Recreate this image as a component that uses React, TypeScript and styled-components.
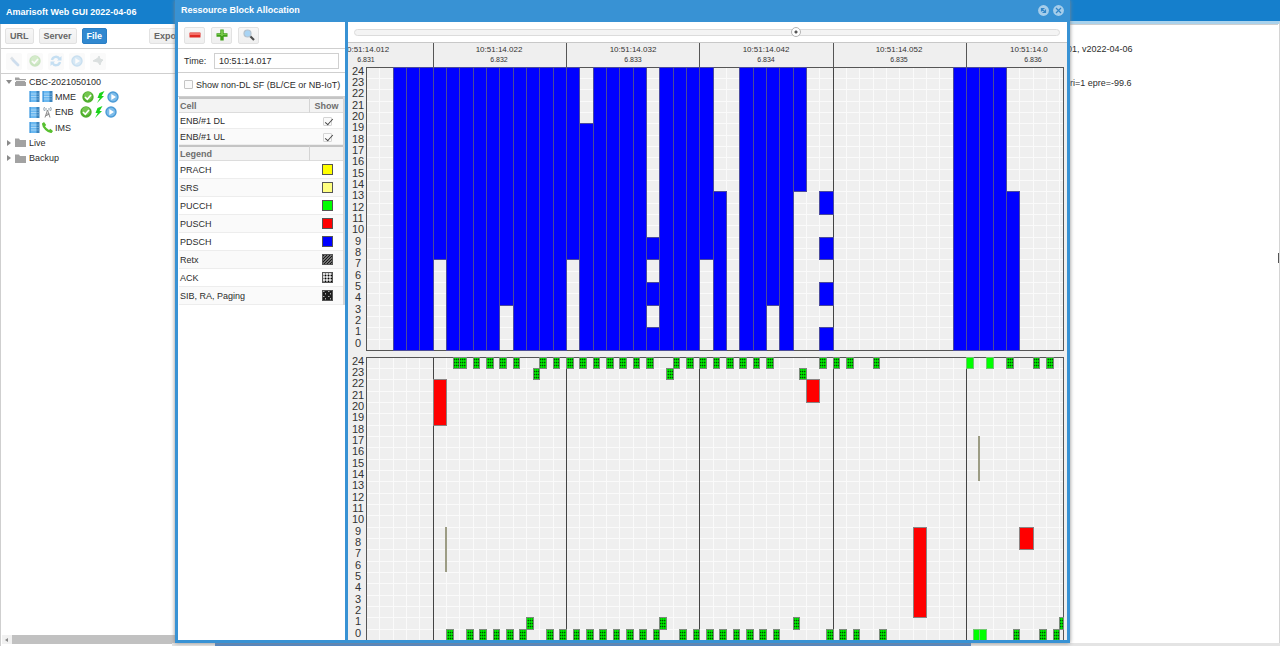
import React from "react";
import styled, { createGlobalStyle, css } from "styled-components";

const Global = createGlobalStyle`
  * { box-sizing: border-box; }
  body { margin: 0; background: #fff; overflow: hidden; }
  body, button, input, table { font-family: "Liberation Sans", Arial, sans-serif; font-size: 9px; color: #2c2c2c; }
`;

/* ---------- page ---------- */

const Page = styled.div`
  position: relative;
  display: flex;
  flex-direction: column;
  height: 100vh;
  overflow: hidden;
`;

const AppHeader = styled.header`
  flex: none;
  height: 24px;
  padding: 0 6px;
  display: flex;
  align-items: center;
  background: #157fcc;
`;

const Title = styled.h1`
  margin: 0;
  font-size: 9px;
  line-height: 12px;
  font-weight: bold;
  color: #fff;
`;

const Columns = styled.div`
  flex: 1;
  min-height: 0;
  display: flex;
`;

const Sidebar = styled.aside`
  width: 215px;
  display: flex;
  flex-direction: column;
  border-left: 1px solid #cfcfcf;
`;

const Bar = styled.div<{ $h: number; $gap: number; $pad: number }>`
  flex: none;
  display: flex;
  align-items: center;
  height: ${(p) => p.$h}px;
  gap: ${(p) => p.$gap}px;
  padding: 0 ${(p) => p.$pad}px;
  border-bottom: 1px solid #cfcfcf;
  white-space: nowrap;
`;

const Button = styled.button<{ $active?: boolean; $push?: boolean }>`
  height: 16px;
  padding: 0 4px;
  font-weight: bold;
  line-height: 12px;
  color: #666;
  background: linear-gradient(#f7f7f7, #efefef);
  border: 1px solid #e2e2e2;
  border-radius: 2px;
  white-space: nowrap;
  ${(p) => p.$push && css`margin-left: 37px;`}
  ${(p) =>
    p.$active &&
    css`
      color: #fff;
      background: #3088d0;
      border-color: #2a7ec4;
    `}
`;

const IconButton = styled.button<{ $faded?: boolean }>`
  display: flex;
  align-items: center;
  justify-content: center;
  width: ${(p) => (p.$faded ? 16 : 21)}px;
  height: 17px;
  padding: 0;
  border: 1px solid ${(p) => (p.$faded ? "transparent" : "#e2e2e2")};
  border-radius: 2px;
  background: ${(p) => (p.$faded ? "#fafafa" : "linear-gradient(#f7f7f7, #efefef)")};
  svg { opacity: ${(p) => (p.$faded ? 0.28 : 1)}; }
`;

const Tree = styled.ul`
  flex: none;
  display: grid;
  grid-template-rows: repeat(6, 1fr);
  height: 92px;
  margin: 0;
  padding: 0 0 0 5px;
  list-style: none;
`;

const Node = styled.li<{ $leaf?: boolean }>`
  display: flex;
  align-items: center;
  gap: ${(p) => (p.$leaf ? 2 : 3)}px;
  padding-left: ${(p) => (p.$leaf ? 23 : 0)}px;
  white-space: nowrap;
  svg { flex: none; }
`;

const Status = styled.span`
  display: flex;
  align-items: center;
  gap: 2px;
  margin-left: 4px;
`;

const ScrollBar = styled.div`
  display: flex;
  height: 9px;
  margin: auto 0 2px 1px;
  background: #c1c1c1;
`;

const ScrollArrow = styled.span`
  display: flex;
  align-items: center;
  justify-content: center;
  width: 10px;
  background: #f1f1f1;
`;

const Main = styled.main`
  flex: 1;
  display: flex;
  justify-content: flex-end;
  margin-top: -3px;
  background: #fff;
  border-right: 1px solid #d4d4d4;
  border-top: 3px solid #a9d2ec;
`;

const Log = styled.div`
  width: 213px;
  padding-top: 18px;
  border-top: 1px solid #cfcfcf;
`;

const LogLine = styled.p<{ $inset?: boolean }>`
  margin: 0 0 22px;
  padding-left: ${(p) => (p.$inset ? 5 : 2)}px;
  line-height: 12px;
  white-space: nowrap;
`;

const Handle = styled.i`
  align-self: center;
  width: 1px;
  height: 10px;
  margin-bottom: 154px;
  background: #555;
`;

const Footer = styled.footer`
  position: absolute;
  left: 172px;
  right: 0;
  bottom: 0;
  display: flex;
  height: 3px;
  padding-left: 43px;
  background: #e4e4e4;
`;

const FooterFill = styled.span`
  width: 71%;
  background: #4f86c6;
`;

/* ---------- floating window ---------- */

const Dialog = styled.section`
  position: absolute;
  top: 0;
  bottom: 3px;
  left: 175px;
  right: 210px;
  display: flex;
  flex-direction: column;
  padding: 0 3px 3px;
  background: #3892d4;
  box-shadow: 0 0 4px #888;
`;

const DialogHeader = styled.header`
  flex: none;
  display: flex;
  align-items: center;
  justify-content: space-between;
  height: 22px;
  padding: 0 3px 2px;
`;

const Tools = styled.div`
  display: flex;
  gap: 4px;
`;

const Tool = styled.button`
  width: 11px;
  height: 11px;
  padding: 0;
  border: 0;
  background: none;
  svg { display: block; }
`;

const DialogBody = styled.div`
  flex: 1;
  min-height: 0;
  display: flex;
  gap: 3px;
`;

const Side = styled.div`
  flex: none;
  width: 167px;
  background: #fff;
`;

const Field = styled.label`
  width: 30px;
`;

const TimeInput = styled.input`
  flex: 1;
  min-width: 0;
  height: 16px;
  padding: 0 4px;
  border: 1px solid #d0d0d0;
`;

const Check = styled.input`
  appearance: none;
  flex: none;
  position: relative;
  width: 9px;
  height: 9px;
  margin: 0;
  border: 1px solid #c4c4c4;
  border-radius: 1px;
  background: #fafafa;
  vertical-align: middle;
  &:checked { border-color: #d4d4d4; }
  &:checked::after {
    content: "";
    position: absolute;
    left: 3px;
    top: -1px;
    width: 3px;
    height: 7px;
    border: solid #444;
    border-width: 0 1px 1px 0;
    transform: rotate(42deg);
  }
`;

const Grid = styled.table<{ $row: number }>`
  width: 166px;
  table-layout: fixed;
  border-spacing: 0;
  border-right: 2px solid #d4d4d4;
  margin-left: 1px;
  th, td { padding: 0 1px; line-height: 12px; text-align: left; }
  th {
    height: 16px;
    color: #6e6e6e;
    background: #f3f3f3;
    border-top: 2px solid #c4c4c4;
    border-bottom: 1px solid #dcdcdc;
  }
  th + th { width: 34px; border-left: 1px solid #d4d4d4; text-align: center; }
  td { height: ${(p) => p.$row}px; border-bottom: 1px solid #ededed; }
  td + td { padding-left: 3px; text-align: center; }
  tr:nth-child(even) td { background: #fafafa; }
  td svg { display: block; margin: 0 auto; }
`;

const Chart = styled.div`
  flex: 1;
  min-width: 0;
  display: flex;
  flex-direction: column;
  background: #efefef;
`;

const SliderBar = styled.div`
  flex: none;
  display: flex;
  align-items: center;
  height: 21px;
  padding: 0 7px 0 6px;
  background: #fff;
  border-bottom: 1px solid #c8c8c8;
`;

const Slider = styled.input`
  appearance: none;
  width: 100%;
  height: 7px;
  margin: 0;
  border: 1px solid #dcdcdc;
  border-radius: 4px;
  background: #f4f4f4;
  &::-webkit-slider-thumb {
    appearance: none;
    width: 10px;
    height: 10px;
    border: 1px solid #b4b4b4;
    border-radius: 50%;
    background: radial-gradient(circle, #555 0 1px, #fff 2px);
  }
`;

const Plot = styled.svg`
  flex: 1;
  min-height: 0;
  width: 100%;
  display: block;
  text { font-family: "Liberation Sans", Arial, sans-serif; fill: #333; }
`;

/* ---------- icons ---------- */

const Folder = ({ open }: { open?: boolean }) => (
  <svg width="11" height="9" viewBox="0 0 11 9">
    <path d="M0 .5h4l1 1.500h6v7H0z" fill="#a2a2a2" />
    {open && <path d="M0 3.500h11" stroke="#fff" strokeWidth=".8" />}
    {open && <path d="M0 4.500h1M10 4.500h1" stroke="#fff" />}
  </svg>
);
const Arrow = ({ open }: { open?: boolean }) => (
  <svg width="6" height="6" viewBox="0 0 6 6">
    <path d={open ? "M0 1h6L3 5z" : "M1 0l4 3-4 3z"} fill="#8a8a8a" />
  </svg>
);
const Server = () => (
  <svg width="11" height="11" viewBox="0 0 11 11">
    <path d="M.5 0H8v11H.5z" fill="#6ab8f0" />
    <path d="M7.500 0h3v11h-3z" fill="#3c84bd" />
    <path d="M.5 3h7M.5 5.500h7M.5 8h7" stroke="#c4e2f8" strokeWidth=".7" />
    <path d="M7.500 3h3M7.500 5.500h3M7.500 8h3" stroke="#7fb6de" strokeWidth=".7" />
    <path d="M1.200 0v11" stroke="#3f96dc" strokeWidth="1.200" />
  </svg>
);
const Antenna = () => (
  <svg width="11" height="11" viewBox="0 0 11 11">
    <path d="M5.500 3L3 10.500M5.500 3L8 10.500M4 7h3M3.500 9l4-2" stroke="#8c8c8c" fill="none" />
    <path d="M2.500 0q-1.500 2 0 4M8.500 0q1.500 2 0 4M4 1v2.500M7 1v2.500" stroke="#8fa0ac" fill="none" />
  </svg>
);
const Phone = () => (
  <svg width="11" height="11" viewBox="0 0 11 11">
    <path d="M0 1.500L2 0l2.200 3-1.200 1.200Q4.800 6.800 7 8l1.300-1.200L11 9l-1.400 2Q6.500 11.200 3.200 8T0 1.500z" fill="#58c030" />
  </svg>
);
const Ok = () => (
  <svg width="12" height="12" viewBox="0 0 12 12">
    <circle cx="6" cy="6" r="5.700" fill="#4fae2c" />
    <circle cx="6" cy="5" r="4" fill="#74c650" />
    <path d="M3 6l2.300 2.300 3.700-4.300" stroke="#fff" strokeWidth="1.700" fill="none" />
  </svg>
);
const Bolt = () => (
  <svg width="9" height="12" viewBox="0 0 9 12">
    <path d="M8.500 0L3.500 2 1.500 7h2.300L1 12 8 5H5.500z" fill="#19d419" />
  </svg>
);
const Play = () => (
  <svg width="12" height="12" viewBox="0 0 12 12">
    <circle cx="6" cy="6" r="5" fill="#7dbcea" stroke="#4b9bd6" strokeWidth="1.400" />
    <path d="M4.300 3l4.700 3-4.700 3z" fill="#fff" />
  </svg>
);
const Wrench = () => (
  <svg width="12" height="12" viewBox="0 0 12 12">
    <path d="M5 5l5 5" stroke="#5c94cc" strokeWidth="2.800" strokeLinecap="round" />
    <path d="M2 3.500L4 1.500 6 4 4 5.500z" fill="#8aa0b4" />
  </svg>
);
const Refresh = () => (
  <svg width="12" height="12" viewBox="0 0 12 12">
    <path d="M2 5a4 4 0 0 1 7.500-1M10 7a4 4 0 0 1-7.500 1" fill="none" stroke="#3f9be0" strokeWidth="2.400" />
    <path d="M11.500 1v4.500H7zM.5 11V6.500H5z" fill="#3f9be0" />
  </svg>
);
const Plug = () => (
  <svg width="12" height="12" viewBox="0 0 12 12">
    <path d="M1 6l5-3 1-2 1 3 3 1-2 2-1 3-2-3z" fill="#8a9a9a" stroke="#8a9a9a" />
  </svg>
);
const Minus = () => (
  <svg width="12" height="12" viewBox="0 0 12 12">
    <rect x=".5" y="3.500" width="11" height="5" rx=".5" fill="#e02a24" />
    <rect x="1" y="4" width="10" height="2" fill="#f47068" />
  </svg>
);
const Plus = () => (
  <svg width="12" height="12" viewBox="0 0 12 12">
    <path d="M4.300 .5h3.400v3.800h3.800v3.400H7.700v3.800H4.300V7.700H.5V4.300h3.800z" fill="#3fa018" />
    <path d="M5 1.200h2V5h3.800v1H7v1H5V6H1.200V5H5z" fill="#74c648" />
  </svg>
);
const Magnifier = () => (
  <svg width="12" height="12" viewBox="0 0 12 12">
    <path d="M7 7l4 4" stroke="#4c4c4c" strokeWidth="2.200" />
    <circle cx="4.500" cy="4.500" r="3.500" fill="#a9d4f4" stroke="#b4c2ce" strokeWidth="1.200" />
  </svg>
);
const RoundTool = ({ d }: { d: string }) => (
  <svg width="11" height="11" viewBox="0 0 11 11">
    <circle cx="5.500" cy="5.500" r="5.400" fill="#a5cdea" />
    <path d={d} stroke="#3286c8" strokeWidth="1.200" fill="none" />
  </svg>
);

/* ---------- fills shared by the legend and the chart ---------- */

const PatternSheet = styled.svg`
  position: absolute;
`;

const Patterns = () => (
  <PatternSheet width="0" height="0" aria-hidden>
    <defs>
      <pattern id="retx" width="3" height="3" patternUnits="userSpaceOnUse">
        <rect width="3" height="3" fill="#999" />
        <path d="M-1 1l2-2M0 3l3-3M2 4l2-2" stroke="#111" strokeWidth="1.200" />
      </pattern>
      <pattern id="ack" width="3" height="3" patternUnits="userSpaceOnUse">
        <rect width="3" height="3" fill="#ddd" />
        <rect width="1" height="3" fill="#888" />
        <rect width="3" height="1" fill="#888" />
        <rect width="1" height="1" fill="#000" />
      </pattern>
      <pattern id="sib" width="5" height="5" patternUnits="userSpaceOnUse">
        <rect width="5" height="5" fill="#1c1c1c" />
        <path d="M1 1.500h1.500M3.500 3v1.500" stroke="#aaa" fill="none" />
      </pattern>
      <pattern id="pucchAck" width="2" height="3" patternUnits="userSpaceOnUse">
        <rect width="2" height="3" fill="#00e800" />
        <rect width="1" height="3" fill="#00c000" />
        <rect y="1" width="2" height="1" fill="#00b800" />
        <rect y="1" width="1" height="1" fill="#005000" />
      </pattern>
    </defs>
  </PatternSheet>
);

const legend: [string, string][] = [
  ["PRACH", "#ffff00"],
  ["SRS", "#ffff80"],
  ["PUCCH", "#00ff00"],
  ["PUSCH", "#ff0000"],
  ["PDSCH", "#0000ff"],
  ["Retx", "url(#retx)"],
  ["ACK", "url(#ack)"],
  ["SIB, RA, Paging", "url(#sib)"],
];

/* ---------- chart ---------- */

const LEFT = 18;
const RIGHT = 716;
const DL_TOP = 24;
const UL_TOP = 314;
const ROWS = 25;
const colX = (k: number) => Math.floor(LEFT + 0.4 + (k * 40) / 3);
const rowY = (top: number, r: number) => Math.floor(top + ((24 - r) * 34) / 3);

type Span = [from: number, to: number, hi: number, lo: number];

/* sub-frame columns from..to carry resource blocks hi..lo */
const pdsch: Span[] = [
  [2, 4, 24, 0], [5, 5, 24, 8], [6, 9, 24, 0], [10, 10, 24, 4], [11, 14, 24, 0],
  [15, 15, 24, 8], [16, 16, 19, 0], [17, 20, 24, 0],
  [21, 21, 9, 8], [21, 21, 5, 4], [21, 21, 1, 0],
  [22, 24, 24, 0], [25, 25, 24, 8], [26, 26, 13, 0], [28, 29, 24, 0], [30, 30, 24, 4],
  [31, 31, 24, 0], [32, 32, 24, 14],
  [34, 34, 13, 12], [34, 34, 9, 8], [34, 34, 5, 4], [34, 34, 1, 0],
  [44, 47, 24, 0], [48, 48, 13, 0],
];
const pusch: Span[] = [[5, 5, 22, 19], [33, 33, 22, 21], [41, 41, 9, 2], [49, 49, 9, 8]];
const srs: [number, number, number][] = [[6, 9, 6], [46, 17, 14]];

/* slot numbers (two per sub-frame) by resource block */
const pucch: Record<number, number[]> = {
  24: [13, 14, 16, 18, 20, 22, 26, 28, 30, 32, 34, 36, 38, 40, 42, 46, 48, 50, 52, 54, 56, 58, 60, 68, 70, 72, 76, 96, 100, 102],
  23: [25, 45, 65],
  1: [24, 44, 64, 104],
  0: [12, 15, 17, 19, 21, 23, 27, 29, 31, 33, 35, 37, 39, 41, 43, 47, 49, 51, 53, 55, 57, 59, 61, 69, 71, 73, 77, 97, 101, 103],
};
const pucchPlain: Record<number, number[]> = { 24: [90, 93], 0: [91, 92] };

const frames = [
  ["10:51:14.022", "6.832"], ["10:51:14.032", "6.833"],
  ["10:51:14.042", "6.834"], ["10:51:14.052", "6.835"],
];

const range = (n: number) => Array.from({ length: n }, (_, i) => i);

const Box = (p: { x: number; y: number; w: number; h: number; fill: string; stroke: string }) => (
  <rect x={p.x + 0.5} y={p.y + 0.5} width={p.w} height={p.h} fill={p.fill} stroke={p.stroke} />
);

const Axes = ({ top }: { top: number }) => (
  <g>
    {range(ROWS).map((r) => (
      <text key={r} x="10" y={rowY(top, r) + 8} fontSize="11" textAnchor="middle">{r}</text>
    ))}
    {range(ROWS).map((r) => (
      <rect key={r} x={LEFT} y={rowY(top, r)} width={RIGHT - LEFT} height="1" fill="#fafafa" />
    ))}
    {range(53).map((k) => (
      <rect key={k} x={colX(k)} y={top} width="1" height="283" fill="#fafafa" />
    ))}
  </g>
);

const Frame = ({ top }: { top: number }) => (
  <g>
    {[5, 15, 25, 35, 45].map((k) => (
      <rect key={k} x={colX(k)} y={top} width="1" height="283" fill="#444" />
    ))}
    <rect x={LEFT + 0.5} y={top + 0.5} width={RIGHT - LEFT - 1} height="283" fill="none" stroke="#555" />
  </g>
);

const bars = (spans: Span[], top: number, fill: string, stroke: string) =>
  spans.flatMap(([a, b, hi, lo]) =>
    range(b - a + 1).map((i) => {
      const x = colX(a + i);
      const y = rowY(top, hi);
      return (
        <Box key={`${a + i}-${hi}`} x={x} y={y} w={colX(a + i + 1) - x} h={rowY(top, lo - 1) - y} fill={fill} stroke={stroke} />
      );
    })
  );

const slots = (data: Record<number, number[]>, fill: string, stroke: string) =>
  Object.entries(data).flatMap(([rb, list]) =>
    list.map((s) => {
      const x = colX(s / 2);
      const y = rowY(UL_TOP, +rb);
      return (
        <Box key={`${rb}-${s}`} x={x} y={y} w={Math.min(colX((s + 1) / 2), RIGHT - 1) - x} h={rowY(UL_TOP, +rb - 1) - y} fill={fill} stroke={stroke} />
      );
    })
  );

const Allocation = () => (
  <Plot role="img" aria-label="Resource block allocation">
    <text x="-1" y="9" fontSize="8">0:51:14.012</text>
    <text x={colX(0)} y="19" fontSize="7" textAnchor="middle">6.831</text>
    {frames.map(([time, sfn], i) => (
      <g key={time} textAnchor="middle">
        <text x={colX(i * 10 + 10)} y="9" fontSize="8">{time}</text>
        <text x={colX(i * 10 + 10)} y="19" fontSize="7">{sfn}</text>
      </g>
    ))}
    <text x={colX(50) - 23} y="9" fontSize="8">10:51:14.0</text>
    <text x={colX(50)} y="19" fontSize="7" textAnchor="middle">6.836</text>
    {[5, 15, 25, 35, 45].map((k) => (
      <rect key={k} x={colX(k)} y="0" width="1" height={DL_TOP} fill="#555" />
    ))}
    <Axes top={DL_TOP} />
    <Frame top={DL_TOP} />
    {bars(pdsch, DL_TOP, "#0000ff", "#4a4a9c")}
    <Axes top={UL_TOP} />
    <Frame top={UL_TOP} />
    {bars(pusch, UL_TOP, "#ff0000", "#8c8484")}
    {slots(pucch, "url(#pucchAck)", "#7c8c7c")}
    {slots(pucchPlain, "#00ff00", "#70c870")}
    {srs.map(([k, hi, lo]) => (
      <rect key={k} x={colX(k) - 1} y={rowY(UL_TOP, hi)} width="2" height={rowY(UL_TOP, lo - 1) - rowY(UL_TOP, hi)} fill="#9c9c84" />
    ))}
  </Plot>
);

/* ---------- app ---------- */

const Health = () => (
  <Status><Ok /><Bolt /><Play /></Status>
);

export default function App() {
  return (
    <Page>
      <Global />
      <Patterns />
      <AppHeader><Title>Amarisoft Web GUI 2022-04-06</Title></AppHeader>
      <Columns>
        <Sidebar>
          <Bar $h={25} $gap={5} $pad={4}>
            <Button>URL</Button>
            <Button>Server</Button>
            <Button $active>File</Button>
            <Button $push>Expo</Button>
          </Bar>
          <Bar $h={25} $gap={5} $pad={5}>
            <IconButton $faded aria-label="Settings"><Wrench /></IconButton>
            <IconButton $faded aria-label="Enable"><Ok /></IconButton>
            <IconButton $faded aria-label="Refresh"><Refresh /></IconButton>
            <IconButton $faded aria-label="Play"><Play /></IconButton>
            <IconButton $faded aria-label="Connect"><Plug /></IconButton>
          </Bar>
          <Tree>
            <Node><Arrow open /><Folder open />CBC-2021050100</Node>
            <Node $leaf><Server /><Server />MME<Health /></Node>
            <Node $leaf><Server /><Antenna />ENB<Health /></Node>
            <Node $leaf><Server /><Phone />IMS</Node>
            <Node><Arrow /><Folder />Live</Node>
            <Node><Arrow /><Folder />Backup</Node>
          </Tree>
          <ScrollBar>
            <ScrollArrow>
              <svg width="4" height="4" viewBox="0 0 4 4"><path d="M3 0v4L0 2z" fill="#888" /></svg>
            </ScrollArrow>
          </ScrollBar>
        </Sidebar>
        <Main>
          <Log>
            <LogLine>01, v2022-04-06</LogLine>
            <LogLine $inset>ri=1 epre=-99.6</LogLine>
          </Log>
          <Handle />
        </Main>
      </Columns>
      <Footer><FooterFill /></Footer>

      <Dialog>
        <DialogHeader>
          <Title as="h2">Ressource Block Allocation</Title>
          <Tools>
            <Tool aria-label="Restore"><RoundTool d="M3.500 6.500V3.500H6.500M7.500 4.500v3H4.500M4 4l3 3" /></Tool>
            <Tool aria-label="Close"><RoundTool d="M3 3l5 5M8 3L3 8" /></Tool>
          </Tools>
        </DialogHeader>
        <DialogBody>
          <Side>
            <Bar $h={27} $gap={6} $pad={6}>
              <IconButton aria-label="Zoom out"><Minus /></IconButton>
              <IconButton aria-label="Zoom in"><Plus /></IconButton>
              <IconButton aria-label="Search"><Magnifier /></IconButton>
            </Bar>
            <Bar $h={24} $gap={0} $pad={6}>
              <Field htmlFor="time">Time:</Field>
              <TimeInput id="time" defaultValue="10:51:14.017" />
            </Bar>
            <Bar as="label" $h={24} $gap={3} $pad={6}>
              <Check type="checkbox" />
              Show non-DL SF (BL/CE or NB-IoT)
            </Bar>
            <Grid $row={16}>
              <thead><tr><th>Cell</th><th>Show</th></tr></thead>
              <tbody>
                {["ENB/#1 DL", "ENB/#1 UL"].map((c) => (
                  <tr key={c}>
                    <td>{c}</td>
                    <td><Check type="checkbox" defaultChecked aria-label={`Show ${c}`} /></td>
                  </tr>
                ))}
              </tbody>
            </Grid>
            <Grid $row={18}>
              <thead><tr><th>Legend</th><th /></tr></thead>
              <tbody>
                {legend.map(([name, fill]) => (
                  <tr key={name}>
                    <td>{name}</td>
                    <td>
                      <svg width="11" height="11"><rect x=".5" y=".5" width="10" height="10" fill={fill} stroke="#555" /></svg>
                    </td>
                  </tr>
                ))}
              </tbody>
            </Grid>
          </Side>
          <Chart>
            <SliderBar>
              <Slider type="range" min={0} max={1000} defaultValue={628} aria-label="Position" />
            </SliderBar>
            <Allocation />
          </Chart>
        </DialogBody>
      </Dialog>
    </Page>
  );
}
